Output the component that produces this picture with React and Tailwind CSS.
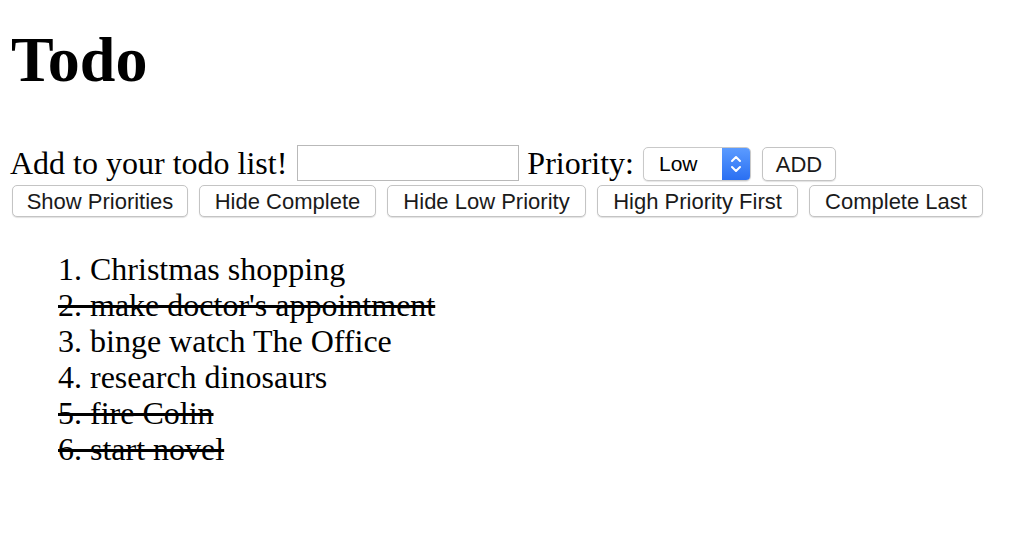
import React from "react";

const serif = { fontFamily: '"Liberation Serif", "Times New Roman", serif' };

const items = [
  { text: "Christmas shopping", done: false },
  { text: "make doctor's appointment", done: true },
  { text: "binge watch The Office", done: false },
  { text: "research dinosaurs", done: false },
  { text: "fire Colin", done: true },
  { text: "start novel", done: true },
];

const btn =
  "h-[32px] bg-white border border-[#c4c4c4] rounded-[5px] shadow-[0_1px_1px_rgba(0,0,0,0.12)] text-[22px] text-[#1a1a1a] font-['Liberation_Sans',Arial,sans-serif] flex items-center justify-center";

export default function App() {
  return (
    <div className="bg-white w-[1036px] h-[548px] text-black" style={serif}>
      <h1 className="pl-[11px] pt-[28px] text-[64px] leading-[64px] font-bold">Todo</h1>
      <div className="flex items-center pl-[10px] mt-[53px] h-[36px]">
        <span className="text-[32px] leading-[36px]">Add to your todo list!</span>
        <input className="ml-[10px] w-[222px] h-[36px] border border-[#b9b9b9] bg-white" />
        <span className="ml-[8px] text-[32px] leading-[36px]">Priority:</span>
        <div className="ml-[9px] w-[108px] h-[34px] mt-[2px] flex border border-[#c9c9c9] rounded-[5px] overflow-hidden bg-white shadow-[0_1px_1px_rgba(0,0,0,0.1)]">
          <span className="flex-1 pl-[15px] flex items-center text-[21px] font-['Liberation_Sans',Arial,sans-serif]">Low</span>
          <span className="w-[28px] bg-gradient-to-b from-[#5b9bff] to-[#2a6ff2] flex items-center justify-center">
            <svg width="12" height="20" viewBox="0 0 12 20" fill="none" stroke="white" strokeWidth="2" strokeLinecap="round" strokeLinejoin="round">
              <path d="M2 7 L6 3 L10 7" />
              <path d="M2 13 L6 17 L10 13" />
            </svg>
          </span>
        </div>
        <button className={`${btn} ml-[11px] mt-[2px] w-[74px] h-[34px]`}>ADD</button>
      </div>
      <div className="flex gap-[11px] pl-[12px] mt-[4px]">
        <button className={`${btn} w-[176px]`}>Show Priorities</button>
        <button className={`${btn} w-[177px]`}>Hide Complete</button>
        <button className={`${btn} w-[199px]`}>Hide Low Priority</button>
        <button className={`${btn} w-[201px]`}>High Priority First</button>
        <button className={`${btn} w-[174px]`}>Complete Last</button>
      </div>
      <ol className="mt-[34px] pl-[58px] text-[32px] leading-[36px]">
        {items.map((it, i) => (
          <li key={i} className={it.done ? "line-through" : ""}>
            {i + 1}. {it.text}
          </li>
        ))}
      </ol>
    </div>
  );
}
